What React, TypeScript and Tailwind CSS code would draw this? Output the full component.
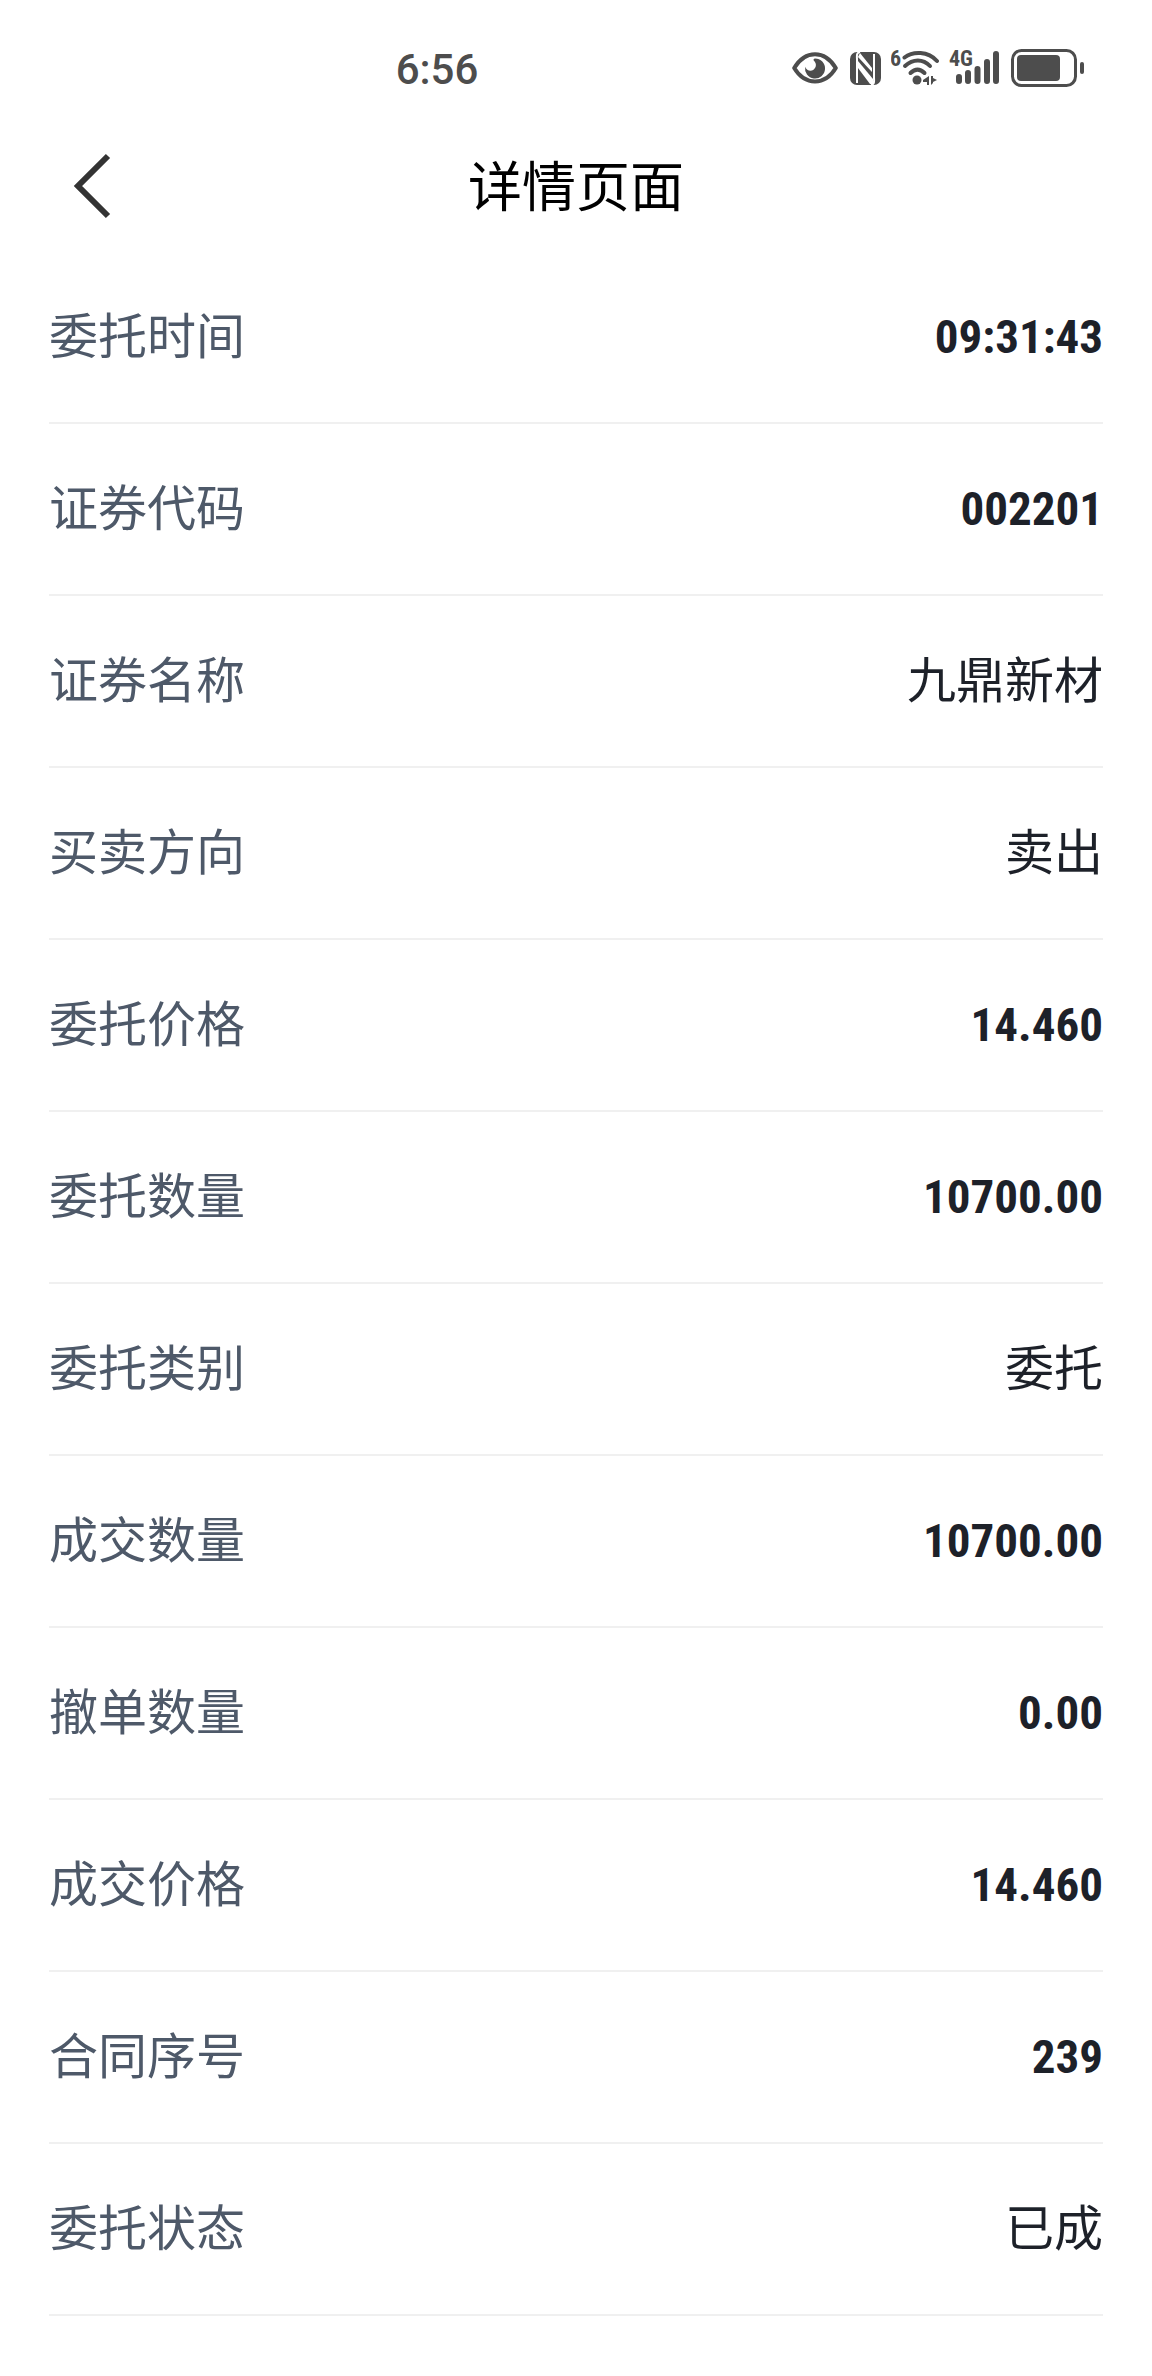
type DetailItem = {
  label: string;
  value: string;
  numeric?: boolean;
};

const details: DetailItem[] = [
  { label: "委托时间", value: "09:31:43", numeric: true },
  { label: "证券代码", value: "002201", numeric: true },
  { label: "证券名称", value: "九鼎新材" },
  { label: "买卖方向", value: "卖出" },
  { label: "委托价格", value: "14.460", numeric: true },
  { label: "委托数量", value: "10700.00", numeric: true },
  { label: "委托类别", value: "委托" },
  { label: "成交数量", value: "10700.00", numeric: true },
  { label: "撤单数量", value: "0.00", numeric: true },
  { label: "成交价格", value: "14.460", numeric: true },
  { label: "合同序号", value: "239", numeric: true },
  { label: "委托状态", value: "已成" },
];

function EyeIcon() {
  return (
    <svg width="48" height="32" viewBox="0 0 48 32" fill="none">
      <path
        d="M2.2 16C7 8 14 2.2 23 2.2S39 8 43.8 16C39 24 32 29.4 23 29.4S7 24 2.2 16Z"
        stroke="currentColor"
        strokeWidth="4"
        strokeLinejoin="round"
      />
      <path
        d="M23 6.5a10 10 0 1 1-9.8 8.2c1.2 3.6 5.2 5 8 3.2 3-1.9 4-6.4.5-9.4-.5-.9.1-1.9 1.3-2Z"
        fill="currentColor"
      />
    </svg>
  );
}

function NfcIcon() {
  return (
    <svg width="31" height="33" viewBox="0 0 31 33" fill="none">
      <rect width="31" height="33" rx="7" fill="currentColor" />
      <path d="M10 0C6 1 7 4 7 8v23M21 33c4-1 3-4 3-8V2" stroke="white" strokeWidth="2" />
      <path d="M10 1l12 15v4L8 5Z" fill="white" />
      <path d="M8 9l15 18v5h-3L8 16Z" fill="white" />
    </svg>
  );
}

function WifiIcon() {
  return (
    <svg width="48" height="44" viewBox="0 -4 48 44" fill="none">
      <text
        x="-1"
        y="16"
        className="font-['Roboto_Condensed','Roboto',sans-serif] text-[22px] font-bold"
        fill="currentColor"
      >
        6
      </text>
      <g stroke="currentColor" strokeWidth="4" strokeLinecap="round">
        <path d="M13.5 7.5C22 1 37 1 46 11" />
        <path d="M14 16c8-7.5 18-7.5 25 0" />
        <path d="M19.5 23c4.5-4.5 9.5-4.5 14 0" />
      </g>
      <circle cx="26" cy="30" r="4.5" fill="currentColor" />
      <path d="M38 26v9h-2v-3h-4v-2ZM40 26h2v2l4 2-4 2v1l-2 2Z" fill="currentColor" />
    </svg>
  );
}

function SignalIcon() {
  return (
    <svg width="52" height="44" viewBox="0 -4 52 44" fill="none">
      <text
        x="0"
        y="16"
        className="font-['Roboto_Condensed','Roboto',sans-serif] text-[22px] font-bold"
        fill="currentColor"
      >
        4G
      </text>
      <path
        d="M10 27v4M19 23v8M28.5 19v12M38 12v19M47 4v27"
        stroke="currentColor"
        strokeWidth="6"
        strokeLinecap="round"
      />
    </svg>
  );
}

function BatteryIcon() {
  return (
    <svg width="73" height="38" viewBox="0 0 73 38" fill="none">
      <rect x="1.5" y="1.5" width="63" height="35" rx="9" stroke="currentColor" strokeWidth="3" />
      <rect x="6" y="6" width="43" height="26" rx="4" fill="currentColor" />
      <rect x="69" y="13" width="4" height="12" rx="2" fill="currentColor" />
    </svg>
  );
}

function StatusBar() {
  return (
    <div className="flex h-[120px] items-center justify-between pt-4 pr-[68px] text-[#4d4d4d]">
      <span className="ml-[36.5%] pt-1 font-['Roboto',sans-serif] text-[42px] leading-none font-medium">
        6:56
      </span>
      <div className="flex items-center gap-[10px]">
        <EyeIcon />
        <NfcIcon />
        <WifiIcon />
        <SignalIcon />
        <BatteryIcon />
      </div>
    </div>
  );
}

function Header() {
  return (
    <header className="grid h-[132px] grid-cols-[1fr_auto_1fr] items-center px-[48px]">
      <button type="button" aria-label="返回" className="flex w-fit p-6 text-[#333]">
        <svg width="40" height="66" viewBox="0 0 40 66" fill="none">
          <path d="M36 3 6 33l30 30" stroke="currentColor" strokeWidth="6" />
        </svg>
      </button>
      <h1 className="pb-1 text-[54px] leading-none text-black">详情页面</h1>
    </header>
  );
}

function DetailRow({ label, value, numeric }: DetailItem) {
  return (
    <div className="flex h-[172px] items-center justify-between border-b-2 border-[#f0f0f0]">
      <dt className="pb-[10px] text-[#4e5969]">{label}</dt>
      <dd
        className={
          numeric
            ? "pb-[2px] font-['Roboto_Condensed','Roboto',sans-serif] text-[47px] font-bold text-[#1d2129]"
            : "pb-[10px] text-[#1d2129]"
        }
      >
        {value}
      </dd>
    </div>
  );
}

export default function App() {
  return (
    <div className="min-h-screen bg-white font-['Noto_Sans_CJK_SC',sans-serif]">
      <StatusBar />
      <Header />
      <main>
        <dl className="mx-[49px] text-[49px] leading-none">
          {details.map((item) => (
            <DetailRow key={item.label} {...item} />
          ))}
        </dl>
      </main>
    </div>
  );
}
